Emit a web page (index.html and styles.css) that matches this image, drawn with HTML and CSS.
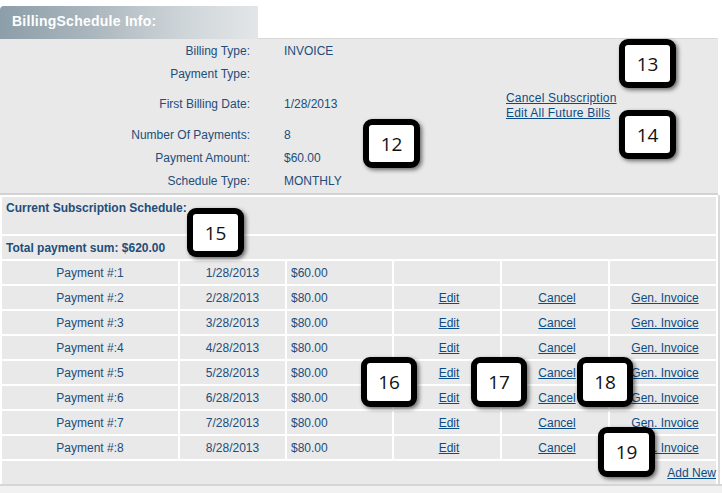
FILE: index.html
```html
<!DOCTYPE html>
<html>
<head>
<meta charset="utf-8">
<link rel="stylesheet" href="styles.css">
</head>
<body>
<div class="page">
  <div class="tab">BillingSchedule Info:</div>
  <div class="info">
    <div class="fields">
      <div class="row r1"><span class="label">Billing Type:</span><span class="value">INVOICE</span></div>
      <div class="row r2"><span class="label">Payment Type:</span><span class="value"></span></div>
      <div class="row r3"><span class="label">First Billing Date:</span><span class="value">1/28/2013</span></div>
      <div class="row r4"><span class="label">Number Of Payments:</span><span class="value">8</span></div>
      <div class="row r5"><span class="label">Payment Amount:</span><span class="value">$60.00</span></div>
      <div class="row r6"><span class="label">Schedule Type:</span><span class="value">MONTHLY</span></div>
    </div>
    <div class="links">
      <a href="#">Cancel Subscription</a>
      <a href="#">Edit All Future Bills</a>
    </div>
  </div>
  <table class="schedule">
    <colgroup>
      <col class="c1"><col class="c2"><col class="c3"><col class="c4"><col class="c5"><col class="c6">
    </colgroup>
    <tr><td colspan="6" class="title-cell"><div class="title">Current Subscription Schedule:</div></td></tr>
    <tr><td colspan="6" class="total">Total payment sum: $620.00</td></tr>
    <tr><td class="name">Payment #:1</td><td class="date">1/28/2013</td><td class="amt">$60.00</td><td></td><td></td><td></td></tr>
    <tr><td class="name">Payment #:2</td><td class="date">2/28/2013</td><td class="amt">$80.00</td><td class="act"><a href="#">Edit</a></td><td class="act"><a href="#">Cancel</a></td><td class="act"><a href="#">Gen. Invoice</a></td></tr>
    <tr><td class="name">Payment #:3</td><td class="date">3/28/2013</td><td class="amt">$80.00</td><td class="act"><a href="#">Edit</a></td><td class="act"><a href="#">Cancel</a></td><td class="act"><a href="#">Gen. Invoice</a></td></tr>
    <tr><td class="name">Payment #:4</td><td class="date">4/28/2013</td><td class="amt">$80.00</td><td class="act"><a href="#">Edit</a></td><td class="act"><a href="#">Cancel</a></td><td class="act"><a href="#">Gen. Invoice</a></td></tr>
    <tr><td class="name">Payment #:5</td><td class="date">5/28/2013</td><td class="amt">$80.00</td><td class="act"><a href="#">Edit</a></td><td class="act"><a href="#">Cancel</a></td><td class="act"><a href="#">Gen. Invoice</a></td></tr>
    <tr><td class="name">Payment #:6</td><td class="date">6/28/2013</td><td class="amt">$80.00</td><td class="act"><a href="#">Edit</a></td><td class="act"><a href="#">Cancel</a></td><td class="act"><a href="#">Gen. Invoice</a></td></tr>
    <tr><td class="name">Payment #:7</td><td class="date">7/28/2013</td><td class="amt">$80.00</td><td class="act"><a href="#">Edit</a></td><td class="act"><a href="#">Cancel</a></td><td class="act"><a href="#">Gen. Invoice</a></td></tr>
    <tr><td class="name">Payment #:8</td><td class="date">8/28/2013</td><td class="amt">$80.00</td><td class="act"><a href="#">Edit</a></td><td class="act"><a href="#">Cancel</a></td><td class="act"><a href="#">Gen. Invoice</a></td></tr>
    <tr><td colspan="6" class="addnew"><a href="#">Add New</a></td></tr>
  </table>
  <div class="footer"></div>

  <div class="badge b12">12</div>
  <div class="badge b13">13</div>
  <div class="badge b14">14</div>
  <div class="badge b15">15</div>
  <div class="badge b16">16</div>
  <div class="badge b17">17</div>
  <div class="badge b18">18</div>
  <div class="badge b19">19</div>
</div>
</body>
</html>
```
FILE: styles.css
```css
html, body {
  margin: 0;
  padding: 0;
  background: #ffffff;
}
body {
  font-family: "Liberation Sans", Arial, sans-serif;
  font-size: 12px;
  color: #224d79;
}
.page {
  position: relative;
  width: 722px;
  height: 493px;
  overflow: hidden;
  padding-top: 6px;
  box-sizing: border-box;
}
.tab {
  position: relative;
  z-index: 1;
  width: 258px;
  height: 33px;
  margin-bottom: -1px;
  box-sizing: border-box;
  padding-left: 12px;
  line-height: 31px;
  font-size: 14px;
  font-weight: bold;
  letter-spacing: 0.25px;
  color: #ffffff;
  border-top-left-radius: 4px;
  background: linear-gradient(to right, #8c9ea9 0%, #aab6bd 35%, #cdd4d8 70%, #e3e6e8 100%);
}
.info {
  display: flex;
  width: 718px;
  height: 154px;
  background: #e9e9e9;
  border-top: 1px solid #d9d9d9;
  border-bottom: 2px solid #d2d2d2;
  box-sizing: content-box;
}
.fields {
  width: 506px;
  display: flex;
  flex-direction: column;
}
.row {
  display: flex;
}
.label {
  width: 250px;
  text-align: right;
}
.value {
  margin-left: 34px;
}
.r1 { height: 24px; line-height: 24px; }
.r2 { height: 22px; line-height: 22px; }
.r3 { height: 38px; line-height: 38px; }
.r4 { height: 24px; line-height: 24px; }
.r5 { height: 22px; line-height: 22px; }
.r6 { height: 24px; line-height: 24px; }
.links {
  display: flex;
  flex-direction: column;
  align-items: flex-start;
  padding-top: 52px;
  line-height: 15px;
  letter-spacing: 0.2px;
}
a {
  color: #0b4c86;
  text-decoration: underline;
}
.schedule {
  width: 718px;
  table-layout: fixed;
  border-collapse: separate;
  border-spacing: 2px;
  background: #ffffff;
  border-right: 2px solid #dadada;
}
.c1 { width: 176px; }
.c2 { width: 105px; }
.c3 { width: 105px; }
.c4 { width: 106px; }
.c5 { width: 106px; }
.c6 { width: 106px; }
.schedule td {
  background: #e9e9e9;
  padding: 0;
  height: 23px;
  line-height: 14px;
  vertical-align: middle;
  white-space: nowrap;
}
.schedule td.title-cell {
  height: 37px;
  vertical-align: top;
}
.title {
  height: 37px;
  box-sizing: border-box;
  padding: 4px 0 0 4px;
  font-weight: bold;
}
.total {
  font-weight: bold;
  text-indent: 4px;
}
.name, .date, .act {
  text-align: center;
}
.amt {
  text-indent: 4px;
}
.act a {
  position: relative;
  left: 2px;
}
.addnew {
  text-align: right;
  padding-right: 1px;
}
.footer {
  height: 10px;
  border-top: 2px solid #d6d6d6;
  background: #f1f1f1;
  margin-top: -2px;
}
.badge {
  position: absolute;
  width: 57px;
  height: 49px;
  box-sizing: border-box;
  border: 6px solid #000000;
  border-radius: 9px;
  background: #ffffff;
  box-shadow: 2px 2px 4px rgba(0, 0, 0, 0.55);
  font-family: "Open Sans", "DejaVu Sans", sans-serif;
  font-size: 19px;
  color: #111111;
  display: flex;
  align-items: center;
  justify-content: center;
}
.b12 { left: 363px; top: 119px; }
.b13 { left: 619px; top: 39px; }
.b14 { left: 619px; top: 110px; }
.b15 { left: 187px; top: 208px; }
.b16 { left: 361px; top: 357px; width: 56px; height: 50px; }
.b17 { left: 471px; top: 357px; width: 56px; height: 50px; }
.b18 { left: 577px; top: 357px; width: 56px; height: 50px; }
.b19 { left: 598px; top: 427px; height: 50px; }
```
